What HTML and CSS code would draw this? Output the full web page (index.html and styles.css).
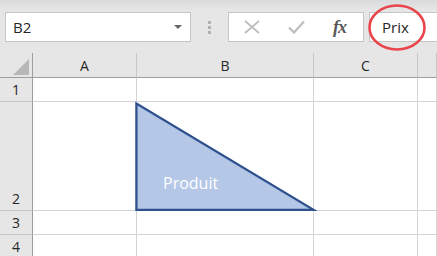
FILE: index.html
```html
<!DOCTYPE html>
<html lang="fr">
<head>
    <meta charset="UTF-8">
    <title>Classeur</title>
    <link rel="stylesheet" href="styles.css">
</head>
<body>
    <div class="toolbar">
        <div class="name-box">
            <span>B2</span>
            <svg class="arrow" width="8" height="4" viewBox="0 0 8 4"><polygon points="0,0 8,0 4,4" fill="#666"/></svg>
        </div>
        <div class="grip"><i></i><i></i><i></i></div>
        <div class="fx-box">
            <svg class="icon" width="16" height="14" viewBox="0 0 16 14">
                <path d="M1 1 L15 13 M15 1 L1 13" stroke="#bdbdbd" stroke-width="1.8" fill="none"/>
            </svg>
            <svg class="icon" width="17" height="14" viewBox="0 0 17 14">
                <path d="M1 7.5 L6 12.5 L16 1.5" stroke="#bdbdbd" stroke-width="2.2" fill="none"/>
            </svg>
            <span class="fx">fx</span>
        </div>
        <div class="formula">
            <span>Prix</span>
        </div>
        <svg class="highlight" width="62" height="50" viewBox="0 0 62 50">
            <ellipse cx="29" cy="24.5" rx="27.5" ry="22" fill="none" stroke="#e8454c" stroke-width="2.6"/>
        </svg>
    </div>

    <div class="sheet">
        <div class="corner">
            <svg width="33" height="25" viewBox="0 0 33 25"><polygon points="29,6 29,22 13,22" fill="#b7b7b7"/></svg>
        </div>
        <div class="col-head">A</div>
        <div class="col-head">B</div>
        <div class="col-head">C</div>
        <div class="col-head"></div>

        <div class="row-head">1</div>
        <div class="cell"></div><div class="cell"></div><div class="cell"></div><div class="cell"></div>

        <div class="row-head">2</div>
        <div class="cell"></div><div class="cell"></div><div class="cell"></div><div class="cell"></div>

        <div class="row-head">3</div>
        <div class="cell"></div><div class="cell"></div><div class="cell"></div><div class="cell"></div>

        <div class="row-head">4</div>
        <div class="cell"></div><div class="cell"></div><div class="cell"></div><div class="cell"></div>

        <!-- forme posée sur la feuille -->
        <svg class="shape" width="437" height="203" viewBox="0 0 437 203">
            <polygon points="136.4,50.6 136.4,156.8 313.5,156.8" fill="#b4c7e7" stroke="#2f528f" stroke-width="2.3" stroke-linejoin="miter"/>
            <text x="163" y="135.5" class="shape-text">Produit</text>
        </svg>
    </div>
</body>
</html>
```

FILE: styles.css
```css
body {
    margin: 0;
    background-color: white;
    font-family: 'Open Sans', 'Liberation Sans', sans-serif;
    overflow: hidden;
}
.toolbar {
    position: relative;
    display: flex;
    height: 53px;
    padding: 12px 0 0 5px;
    box-sizing: border-box;
    background: linear-gradient(#dadada, #e6e6e6 10px);
}
.name-box {
    display: flex;
    align-items: center;
    justify-content: space-between;
    width: 186px;
    height: 30px;
    box-sizing: border-box;
    padding: 0 8px 0 7px;
    background-color: white;
    border: 1px solid #c6c6c6;
    font-size: 15px;
    color: #262626;
}
.grip {
    width: 37px;
    height: 30px;
    display: flex;
    flex-direction: column;
    align-items: center;
    justify-content: center;
    gap: 2px;
}
.grip i {
    width: 3px;
    height: 3px;
    background-color: #b0b0b0;
}
.fx-box {
    display: flex;
    align-items: center;
    width: 136px;
    height: 30px;
    box-sizing: border-box;
    background-color: white;
    border: 1px solid #c6c6c6;
    padding-left: 15px;
}
.fx-box .icon:nth-child(2) {
    margin-left: 28px;
}
.fx {
    margin-left: 28px;
    font-family: 'Liberation Serif', serif;
    font-style: italic;
    font-weight: bold;
    font-size: 18px;
    color: #595959;
    letter-spacing: -1px;
}
.formula {
    flex: 1;
    display: flex;
    align-items: center;
    height: 30px;
    margin-left: 5px;
    box-sizing: border-box;
    padding-left: 12px;
    background-color: white;
    border: 1px solid #c6c6c6;
    border-right: none;
    font-size: 15px;
    color: #262626;
}
.highlight {
    position: absolute;
    left: 368px;
    top: 3px;
}
.sheet {
    position: relative;
    display: grid;
    grid-template-columns: 33px 104px 177px 104px 1fr;
    grid-template-rows: 25px 24px 109px 24px 24px;
}
.sheet > div {
    box-sizing: border-box;
    border-right: 1px solid #d4d4d4;
    border-bottom: 1px solid #d4d4d4;
}
.corner,
.col-head,
.row-head {
    background-color: #e6e6e6;
    color: #262626;
    font-size: 14px;
}
.sheet > .corner {
    border-right-color: #9e9e9e;
    border-bottom-color: #9e9e9e;
}
.sheet > .corner svg {
    display: block;
}
.sheet > .col-head {
    display: flex;
    align-items: flex-end;
    justify-content: center;
    padding-bottom: 2px;
    border-right-color: #c8c8c8;
    border-bottom-color: #9e9e9e;
    line-height: 18px;
}
.sheet > .row-head {
    display: flex;
    align-items: flex-end;
    justify-content: center;
    padding-bottom: 2px;
    border-right-color: #9e9e9e;
    border-bottom-color: #c8c8c8;
    line-height: 18px;
}
.shape {
    position: absolute;
    left: 0;
    top: 0;
    pointer-events: none;
}
.shape-text {
    font-family: 'Open Sans', 'Liberation Sans', sans-serif;
    font-size: 16px;
    fill: white;
}
```
